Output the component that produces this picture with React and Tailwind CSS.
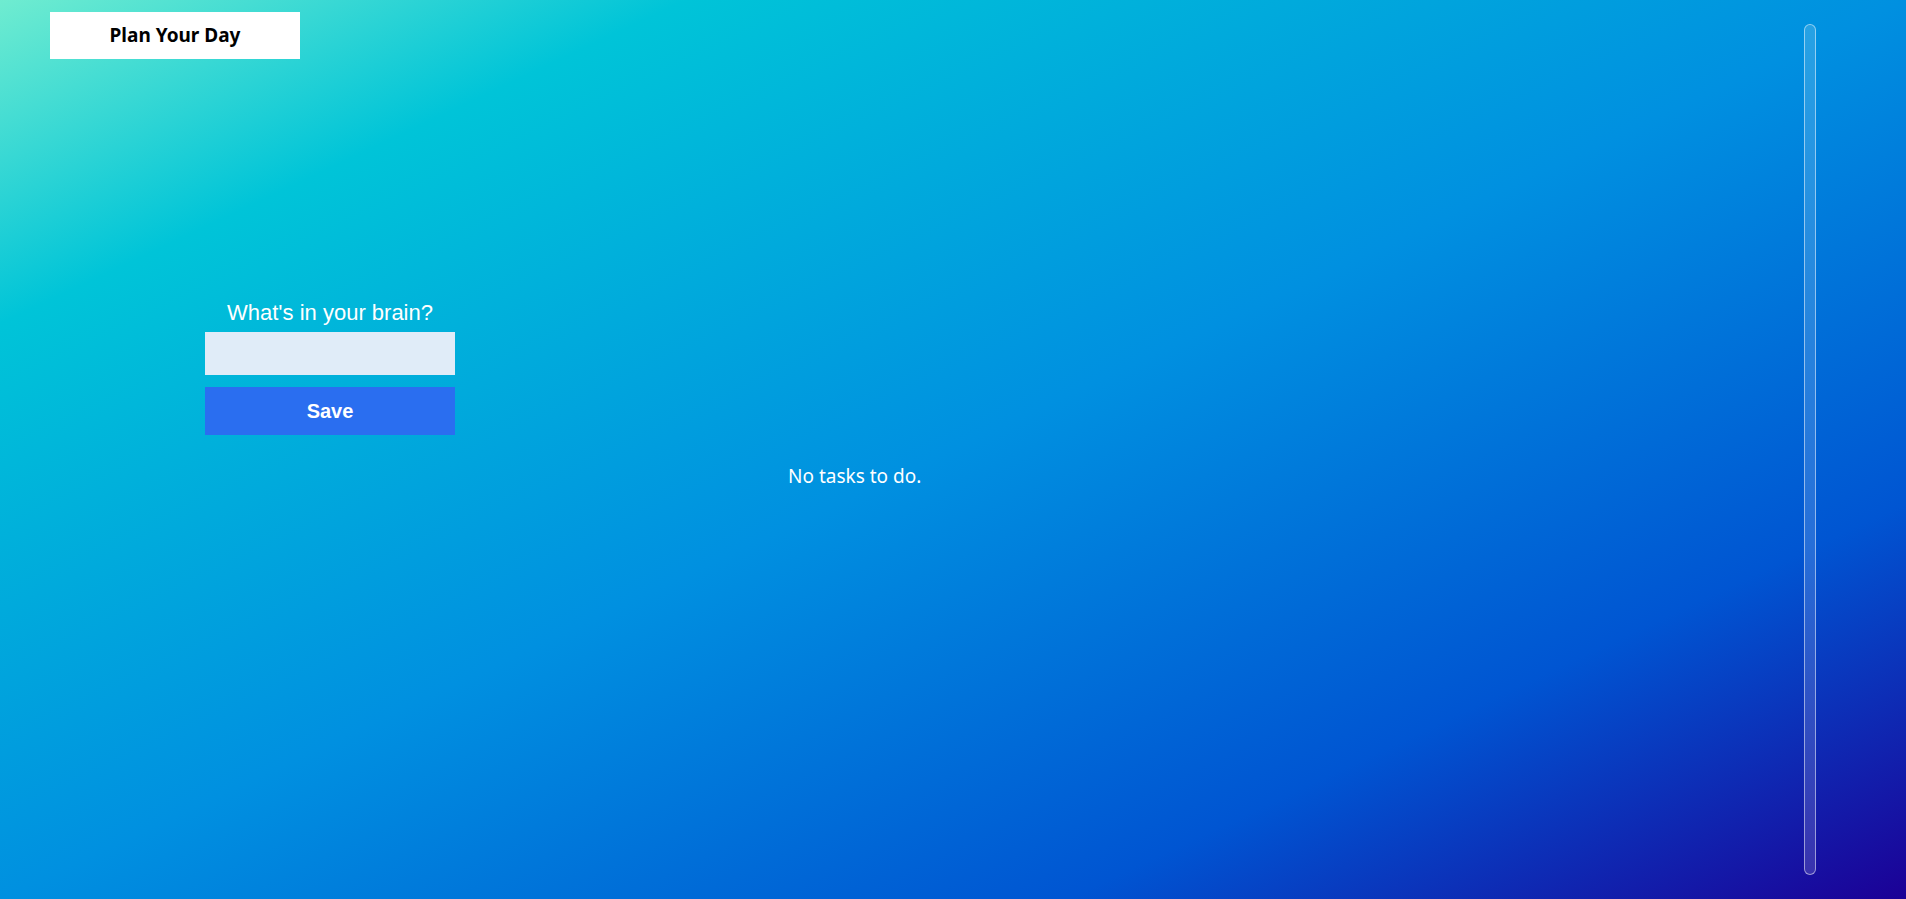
export default function App() {
  return (
    <div className="flex h-[899px] w-full bg-[linear-gradient(to_bottom_right,#6fecd0_0%,#00c4d8_18%,#0090e0_50%,#0055d2_78%,#1c0096_100%)] font-['Noto_Sans',sans-serif] overflow-hidden">
      <div className="flex-1 flex flex-col">
        <div className="pt-[12px] pl-[50px]">
          <div className="w-[250px] h-[47px] bg-white flex items-center justify-center text-[19px] font-bold text-black">
            Plan Your Day
          </div>
        </div>
        <div className="flex mt-[241px]">
          <div className="ml-[205px] w-[250px] flex flex-col items-center">
            <label className="text-[22px] leading-[26px] text-white font-['Liberation_Sans',Arial,sans-serif]">
              What's in your brain?
            </label>
            <input className="mt-[6px] w-full h-[43px] bg-[#e0ecf8] outline-none border-0 px-2" />
            <button className="mt-[12px] w-full h-[48px] bg-[#2a6ef0] text-white font-bold text-[20px] font-['Liberation_Sans',Arial,sans-serif]">
              Save
            </button>
          </div>
          <div className="ml-[333px] mt-[162px] text-white text-[19px]">No tasks to do.</div>
        </div>
      </div>
      <div className="py-[24px] pr-[90px]">
        <div className="h-full w-[12px] rounded-full border border-white/50 bg-white/15"></div>
      </div>
    </div>
  )
}
